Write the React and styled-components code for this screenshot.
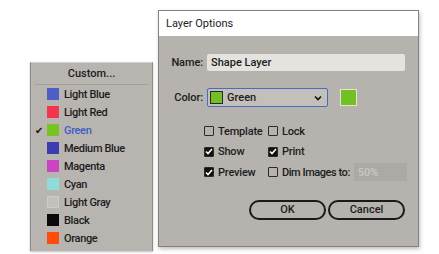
import React from 'react';
import styled, { createGlobalStyle } from 'styled-components';

const GlobalStyle = createGlobalStyle`
  html, body {
    margin: 0;
    padding: 0;
    background: #ffffff;
  }
  body {
    font-family: Roboto, "Liberation Sans", sans-serif;
    font-size: 11px;
    color: #1c1c1c;
  }
`;

const Page = styled.div`
  width: 439px;
  height: 254px;
  display: flex;
  align-items: flex-start;
  padding: 10px 0 0 30px;
  box-sizing: border-box;
  gap: 5px;
  overflow: hidden;
`;

const Menu = styled.div`
  margin-top: 52px;
  width: 123px;
  height: 189px;
  box-sizing: border-box;
  background: #b8b5b0;
  border-top: 1px solid #d4d1cc;
  border-left: 1px solid #8f8c88;
  border-right: 1px solid #8f8c88;
  box-shadow: 0 1px 2px rgba(0, 0, 0, 0.25);
  display: flex;
  flex-direction: column;
`;

const MenuHeader = styled.div`
  height: 21px;
  display: flex;
  align-items: center;
  justify-content: center;
  font-weight: 500;
  margin: 0 4px;
  border-bottom: 1px solid #a3a09b;
`;

const MenuItem = styled.div`
  height: 18px;
  display: flex;
  align-items: center;
  padding-left: 4px;
  font-weight: 500;
  letter-spacing: -0.35px;
  color: ${p => (p.$selected ? '#3f5ec4' : '#1c1c1c')};
`;

const Check = styled.span`
  width: 12px;
  font-size: 10px;
  color: #111;
`;

const Swatch = styled.span`
  width: 12px;
  height: 12px;
  margin-right: 5px;
  background: ${p => p.$color};
  box-sizing: border-box;
  border: 1px solid ${p => p.$border || 'transparent'};
`;

const Dialog = styled.div`
  width: 261px;
  height: 237px;
  box-sizing: border-box;
  background: #b6b3ae;
  border: 1px solid #85827e;
  box-shadow: 1px 2px 4px rgba(0, 0, 0, 0.25);
  display: flex;
  flex-direction: column;
`;

const TitleBar = styled.div`
  height: 25px;
  background: #ffffff;
  display: flex;
  align-items: center;
  padding-left: 7px;
  font-size: 11px;
  color: #222;
`;

const Body = styled.div`
  display: flex;
  flex-direction: column;
  padding: 18px 13px 0 8px;
`;

const Row = styled.div`
  display: flex;
  align-items: center;
  gap: 4px;
  margin-bottom: ${p => p.$mb || 0}px;
`;

const Label = styled.span`
  width: 36px;
  text-align: right;
  font-weight: 500;
  letter-spacing: -0.1px;
`;

const TextInput = styled.div`
  flex: 1;
  height: 17px;
  background: #e5e3df;
  border-radius: 2px;
  display: flex;
  align-items: center;
  padding-left: 4px;
  font-weight: 500;
`;

const Select = styled.div`
  width: 121px;
  height: 19px;
  box-sizing: border-box;
  border: 1.5px solid #4b6bc2;
  border-radius: 2px;
  background: #c3c0bb;
  display: flex;
  align-items: center;
  padding: 0 5px 0 2px;
  font-weight: 500;
`;

const SelectSwatch = styled.span`
  width: 13px;
  height: 13px;
  box-sizing: border-box;
  background: #73c024;
  border: 1px solid #2a2a2a;
  margin-right: 4px;
`;

const Grow = styled.span`
  flex: 1;
`;

const BigSwatch = styled.span`
  margin-left: 8px;
  width: 17px;
  height: 17px;
  box-sizing: border-box;
  background: #73c024;
  border: 1px solid #e3e6cf;
`;

const Checks = styled.div`
  display: grid;
  grid-template-columns: 64px minmax(0, 1fr);
  grid-auto-rows: 20.5px;
  margin-left: 37px;
  margin-top: 14px;
`;

const CheckItem = styled.div`
  display: flex;
  align-items: center;
  gap: 4px;
  font-weight: 500;
  letter-spacing: ${p => (p.$tight ? '-0.45px' : '-0.2px')};
  white-space: nowrap;
`;

const Box = styled.span`
  flex: none;
  width: 10px;
  height: 10px;
  box-sizing: border-box;
  border: 1px solid #2a2a2a;
  border-radius: 1px;
  background: ${p => (p.$on ? '#111' : 'transparent')};
  display: flex;
  align-items: center;
  justify-content: center;
`;

const DimInput = styled.div`
  flex: none;
  width: 53px;
  height: 18px;
  margin-left: auto;
  background: #adaaa5;
  color: #cac7c2;
  display: flex;
  align-items: center;
  padding-left: 4px;
  letter-spacing: 0;
  box-sizing: border-box;
`;

const Buttons = styled.div`
  display: flex;
  justify-content: flex-end;
  gap: 2px;
  margin-top: 17px;
`;

const Button = styled.div`
  width: 77px;
  height: 20px;
  box-sizing: border-box;
  border: 2px solid #1a1a1a;
  border-radius: 10px;
  display: flex;
  align-items: center;
  justify-content: center;
  font-weight: 500;
`;

const Tick = () => (
  <svg width="8" height="7" viewBox="0 0 8 7">
    <path d="M1 3.5 L3 5.5 L7 1" fill="none" stroke="#fff" strokeWidth="1.6" />
  </svg>
);

const colors = [
  { name: 'Light Blue', color: '#4f5ec4' },
  { name: 'Light Red', color: '#f1364d' },
  { name: 'Green', color: '#76c322', selected: true },
  { name: 'Medium Blue', color: '#3a3cb0' },
  { name: 'Magenta', color: '#c946c0' },
  { name: 'Cyan', color: '#8fdcd8' },
  { name: 'Light Gray', color: '#c4c1bd', border: '#cfccc8' },
  { name: 'Black', color: '#0a0a0a' },
  { name: 'Orange', color: '#ff4b0c' },
];

const App = () => (
  <>
    <GlobalStyle />
    <Page>
      <Menu>
        <MenuHeader>Custom...</MenuHeader>
        {colors.map(c => (
          <MenuItem key={c.name} $selected={c.selected}>
            <Check>{c.selected ? '✔' : ''}</Check>
            <Swatch $color={c.color} $border={c.border} />
            {c.name}
          </MenuItem>
        ))}
      </Menu>
      <Dialog>
        <TitleBar>Layer Options</TitleBar>
        <Body>
          <Row $mb={17}>
            <Label>Name:</Label>
            <TextInput>Shape Layer</TextInput>
          </Row>
          <Row>
            <Label>Color:</Label>
            <Select>
              <SelectSwatch />
              Green
              <Grow />
              <svg width="8" height="6" viewBox="0 0 8 6">
                <path d="M1 1.5 L4 4.5 L7 1.5" fill="none" stroke="#111" strokeWidth="1.6" />
              </svg>
            </Select>
            <BigSwatch />
          </Row>
          <Checks>
            <CheckItem><Box />Template</CheckItem>
            <CheckItem><Box />Lock</CheckItem>
            <CheckItem><Box $on><Tick /></Box>Show</CheckItem>
            <CheckItem><Box $on><Tick /></Box>Print</CheckItem>
            <CheckItem><Box $on><Tick /></Box>Preview</CheckItem>
            <CheckItem $tight><Box />Dim Images to:<DimInput>50%</DimInput></CheckItem>
          </Checks>
          <Buttons>
            <Button>OK</Button>
            <Button>Cancel</Button>
          </Buttons>
        </Body>
      </Dialog>
    </Page>
  </>
);

export default App;
